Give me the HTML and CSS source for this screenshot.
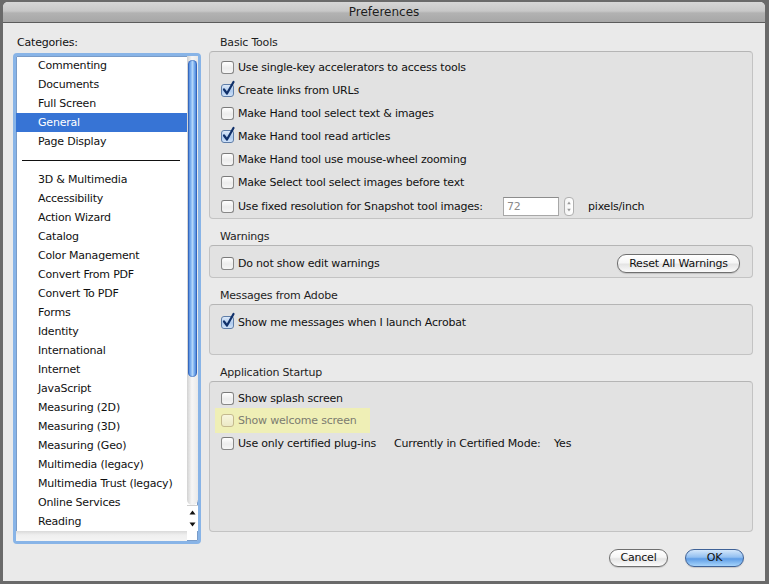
FILE: index.html
```html
<!DOCTYPE html>
<html>
<head>
<meta charset="utf-8">
<title>Preferences</title>
<link rel="stylesheet" href="styles.css">
</head>
<body>
<div class="window">
  <div class="titlebar">Preferences</div>
  <div class="main">
    <div class="left">
      <div class="cat-label">Categories:</div>
      <div class="listbox">
        <div class="list-top">
          <div class="items">
            <div class="item">Commenting</div>
            <div class="item">Documents</div>
            <div class="item">Full Screen</div>
            <div class="item selected">General</div>
            <div class="item">Page Display</div>
            <div class="divider"></div>
            <div class="item">3D &amp; Multimedia</div>
            <div class="item">Accessibility</div>
            <div class="item">Action Wizard</div>
            <div class="item">Catalog</div>
            <div class="item">Color Management</div>
            <div class="item">Convert From PDF</div>
            <div class="item">Convert To PDF</div>
            <div class="item">Forms</div>
            <div class="item">Identity</div>
            <div class="item">International</div>
            <div class="item">Internet</div>
            <div class="item">JavaScript</div>
            <div class="item">Measuring (2D)</div>
            <div class="item">Measuring (3D)</div>
            <div class="item">Measuring (Geo)</div>
            <div class="item">Multimedia (legacy)</div>
            <div class="item">Multimedia Trust (legacy)</div>
            <div class="item">Online Services</div>
            <div class="item">Reading</div>
          </div>
          <div class="vscroll">
            <div class="track"><div class="thumb"></div></div>
            <div class="arrows">
              <svg width="7" height="5" viewBox="0 0 7 5"><path d="M3.5 0.5 L6.5 4.5 L0.5 4.5 Z" fill="#111"/></svg>
              <svg width="7" height="5" viewBox="0 0 7 5"><path d="M0.5 0.5 L6.5 0.5 L3.5 4.5 Z" fill="#111"/></svg>
            </div>
          </div>
        </div>
        <div class="hscroll"></div>
      </div>
    </div>

    <div class="right">
      <div class="group-label first">Basic Tools</div>
      <div class="box basic">
        <div class="row"><span class="cb"></span>Use single-key accelerators to access tools</div>
        <div class="row"><span class="cb checked"><svg width="15" height="17" viewBox="0 0 15 17"><path d="M3 9.5 L6 13.5 L12.5 2" fill="none" stroke="#10306a" stroke-width="2.2" stroke-linecap="round" stroke-linejoin="round"/></svg></span>Create links from URLs</div>
        <div class="row"><span class="cb"></span>Make Hand tool select text &amp; images</div>
        <div class="row"><span class="cb checked"><svg width="15" height="17" viewBox="0 0 15 17"><path d="M3 9.5 L6 13.5 L12.5 2" fill="none" stroke="#10306a" stroke-width="2.2" stroke-linecap="round" stroke-linejoin="round"/></svg></span>Make Hand tool read articles</div>
        <div class="row"><span class="cb"></span>Make Hand tool use mouse-wheel zooming</div>
        <div class="row"><span class="cb"></span>Make Select tool select images before text</div>
        <div class="row tall"><span class="cb"></span><span class="fixed-label">Use fixed resolution for Snapshot tool images:</span><span class="field">72</span><span class="stepper"><svg width="9" height="17" viewBox="0 0 9 17"><path d="M4.5 3 L6.5 6 L2.5 6 Z" fill="#9a9a9a"/><path d="M2.5 11 L6.5 11 L4.5 14 Z" fill="#9a9a9a"/></svg></span><span class="unit">pixels/inch</span></div>
      </div>

      <div class="group-label">Warnings</div>
      <div class="box warn">
        <div class="row"><span class="cb"></span>Do not show edit warnings<span class="btn reset">Reset All Warnings</span></div>
      </div>

      <div class="group-label">Messages from Adobe</div>
      <div class="box msgs">
        <div class="row"><span class="cb checked"><svg width="15" height="17" viewBox="0 0 15 17"><path d="M3 9.5 L6 13.5 L12.5 2" fill="none" stroke="#10306a" stroke-width="2.2" stroke-linecap="round" stroke-linejoin="round"/></svg></span>Show me messages when I launch Acrobat</div>
      </div>

      <div class="group-label">Application Startup</div>
      <div class="box startup">
        <div class="row"><span class="cb"></span>Show splash screen</div>
        <div class="row highlight"><span class="cb disabled"></span>Show welcome screen</div>
        <div class="row"><span class="cb"></span><span class="cert-label">Use only certified plug-ins</span><span class="mode-label">Currently in Certified Mode:</span>Yes</div>
      </div>
    </div>
  </div>
  <div class="footer">
    <span class="btn">Cancel</span>
    <span class="btn default">OK</span>
  </div>
</div>
</body>
</html>
```

FILE: styles.css
```css
html, body {
  margin: 0;
}
body {
  background: #6a6a6a;
  padding: 2px 0 0 3px;
  font-family: "DejaVu Sans", "Noto Sans", sans-serif;
  font-size: 11px;
  letter-spacing: -0.2px;
  color: #111;
  height: 584px;
  box-sizing: border-box;
  overflow: hidden;
}
.window {
  width: 762px;
  height: 579px;
  background: #eaeaea;
  border-radius: 5px 5px 0 0;
  overflow: hidden;
  display: flex;
  flex-direction: column;
}
.titlebar {
  height: 20px;
  line-height: 20px;
  border-bottom: 1px solid #5c5c5c;
  background: linear-gradient(#d6d6d6 0%, #c8c8c8 45%, #b2b2b2 55%, #a7a7a7 100%);
  text-align: center;
  font-size: 12px;
  letter-spacing: 0;
  color: #1c1c1c;
  flex: none;
}
.main {
  display: flex;
  gap: 8px;
  padding: 13px 12px 0 10px;
  flex: none;
}
.left {
  width: 188px;
  flex: none;
}
.cat-label {
  line-height: 14px;
  padding-left: 4px;
  margin-bottom: 3px;
}
.listbox {
  height: 491px;
  box-sizing: border-box;
  border: 3px solid #88b4e7;
  border-radius: 4px;
  background: #fff;
  display: flex;
  flex-direction: column;
  box-shadow: inset 0 0 0 1px #7a9cc8;
}
.list-top {
  flex: 1;
  display: flex;
  min-height: 0;
}
.items {
  flex: 1;
  overflow: hidden;
}
.item {
  height: 19px;
  line-height: 19px;
  padding-left: 22px;
  white-space: nowrap;
}
.item.selected {
  background: #3774d5;
  color: #fff;
}
.divider {
  height: 19px;
  display: flex;
  align-items: center;
  padding: 0 7px 0 6px;
}
.divider::after {
  content: "";
  flex: 1;
  height: 1px;
  background: #111;
}
.vscroll {
  width: 11px;
  flex: none;
  display: flex;
  flex-direction: column;
}
.track {
  flex: 1;
  padding-top: 4px;
  background: linear-gradient(to right, #d2d2d2, #f6f6f6 45%, #e8e8e8);
  border-radius: 0 0 6px 6px;
}
.thumb {
  height: 317px;
  margin: 0 1px;
  border-radius: 5px;
  background: linear-gradient(to right, #3a74d2, #7eb1f0 30%, #b3d6f9 50%, #6aa2ea 75%, #3970cc);
  box-shadow: inset 0 0 0 1px rgba(30, 70, 150, 0.4);
}
.arrows {
  height: 26px;
  flex: none;
  background: #fff;
  display: flex;
  flex-direction: column;
  align-items: center;
  justify-content: space-around;
  border-top: 1px solid #d0d0d0;
  box-sizing: border-box;
}
.hscroll {
  height: 10px;
  margin-right: 11px;
  background: linear-gradient(#d9d9d9, #efefef 40%, #f4f4f4);
  flex: none;
}
.right {
  width: 544px;
  flex: none;
}
.group-label {
  line-height: 14px;
  padding-left: 11px;
  color: #1e1e1e;
  margin-top: 11px;
  margin-bottom: 1px;
}
.group-label.first {
  margin-top: 0;
}
.box {
  border: 1px solid #c3c3c3;
  border-top-color: #b5b5b5;
  border-radius: 4px;
  background: #e2e2e2;
}
.box.basic {
  padding: 4px 0 0;
}
.box.warn {
  padding: 6px 12px 2px 0;
}
.box.msgs {
  padding: 6px 0 20px;
}
.box.startup {
  padding: 5px 0 76px;
}
.row {
  height: 23px;
  display: flex;
  align-items: center;
  padding-left: 11px;
  white-space: nowrap;
}
.row.tall {
  height: 24px;
}
.row.highlight {
  height: 25px;
  width: 155px;
  box-sizing: border-box;
  margin: -2px 0 -1px 5px;
  padding-left: 6px;
  background: #efefb6;
  color: #7c7c70;
}
.cb {
  position: relative;
  width: 13px;
  height: 13px;
  box-sizing: border-box;
  border: 1px solid #888;
  border-top-color: #7a7a7a;
  border-radius: 3px;
  background: linear-gradient(#ffffff, #ececec 55%, #f6f6f6);
  margin-right: 4px;
  flex: none;
}
.cb.checked {
  background: linear-gradient(#dde9f8, #afcbee 55%, #cfe2f9);
  border-color: #5e7da8;
}
.cb svg {
  position: absolute;
  left: -1px;
  top: -5px;
}
.cb.disabled {
  border-color: #c4b98e;
  background: linear-gradient(#f8f6de, #ece9c6);
}
.fixed-label {
  width: 265px;
  flex: none;
}
.field {
  width: 56px;
  height: 19px;
  box-sizing: border-box;
  border: 1px solid #a8a8a8;
  border-top-color: #8c8c8c;
  background: #fff;
  color: #8a8a8a;
  padding-left: 3px;
  line-height: 17px;
  flex: none;
}
.stepper {
  width: 10px;
  height: 19px;
  box-sizing: border-box;
  margin-left: 5px;
  border: 1px solid #b0b0b0;
  border-radius: 4px;
  background: linear-gradient(to right, #f4f4f4, #ffffff);
  display: flex;
  align-items: center;
  justify-content: center;
  flex: none;
}
.unit {
  margin-left: 14px;
}
.cert-label {
  width: 156px;
  flex: none;
}
.mode-label {
  width: 160px;
  flex: none;
}
.btn {
  width: 59px;
  height: 18px;
  box-sizing: border-box;
  border: 1px solid #6f6f6f;
  border-radius: 9px;
  background: linear-gradient(#ffffff, #f6f6f6 45%, #e4e4e4 55%, #fbfbfb);
  text-align: center;
  line-height: 16px;
  color: #111;
  flex: none;
  box-shadow: 0 1px 1px rgba(0, 0, 0, 0.15);
}
.btn.reset {
  width: 123px;
  height: 19px;
  line-height: 17px;
  margin-left: auto;
}
.btn.default {
  border-color: #3f6297;
  background: linear-gradient(#d4e7fb, #93c0f1 45%, #5f9de6 55%, #a6d4fb);
}
.footer {
  display: flex;
  justify-content: flex-end;
  gap: 17px;
  padding: 5px 21px 0 0;
}
```
